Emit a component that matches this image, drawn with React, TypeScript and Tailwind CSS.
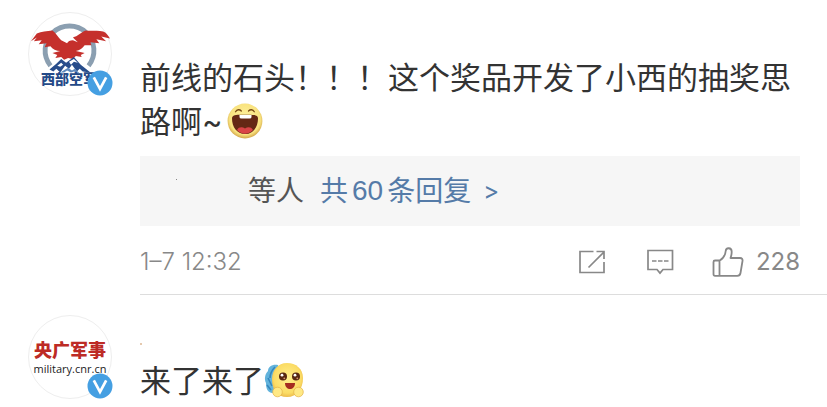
import React from 'react'

type IconProps = {
  className?: string
}

const VerifiedBadge = () => (
  <svg
    viewBox="0 0 26 26"
    className="absolute -right-px bottom-0 size-[26px]"
    role="img"
    aria-label="Verified"
  >
    <circle cx="13" cy="13" r="12.5" fill="#459fe2" />
    <path
      d="M6.8 7.4 13 19 19.2 7.4"
      fill="none"
      stroke="#fff"
      strokeWidth="2.7"
    />
  </svg>
)

const EagleLogo: React.FC<IconProps> = ({ className }) => (
  <svg viewBox="28 12 84 84" className={className} aria-hidden="true">
    <path
      d="M50 66a25 25 0 1 1 39 0"
      fill="none"
      stroke="#8b9fb1"
      strokeWidth="5"
    />
    <path
      d="M30 41 36 33c5-2 10-2 16-3 4 3 6 7 9 10l6 3c1-2 3-3 6-3l5 2-5-5c5-1 8-5 13-7 6 1 12-1 18 1 3 1 5 4 7 7l-9-2 5 5-10-2 3 4-9-1 1 3-7 0c-2 3-5 5-9 6l9 2-4 2 1 2-6-1-3 3-5-1-4 2-3-3-6 1 2-3-5-2 8-2c-4 0-8-2-10-5l-6 1 2-4-8 1 3-4-8 1 3-4z"
      fill="#c5302c"
    />
    <path
      d="m49 70 7-6 5-5 5 4 8-6 7 8 10 8-8-1-3-3-3 3-5-7-3 4-4-3-5 7-4-4-3 3z"
      fill="#284d8b"
    />
    <path
      d="m69 62 5-3 4 4-4-1-3 3zM57 66l4-3 2 2-3 2z"
      fill="#fff"
    />
    <path d="m60 73 8-5 4 3 3-2 5 5-6-2-3 1-4-2-3 2z" fill="#5d88bd" />
  </svg>
)

const LaughEmoji: React.FC<IconProps> = ({ className }) => (
  <svg
    viewBox="0 0 36 36"
    className={className}
    role="img"
    aria-label="Laughing"
  >
    <defs>
      <radialGradient id="laugh" cx=".5" cy=".45" r=".55">
        <stop offset="0" stopColor="#fff3a0" />
        <stop offset=".8" stopColor="#f9e380" />
        <stop offset="1" stopColor="#d2a548" />
      </radialGradient>
    </defs>
    <circle cx="18" cy="18" r="17.4" fill="url(#laugh)" />
    <path
      d="M8.5 8.8c1.5-2.6 4.2-2.6 5.8-.8M21.5 8c1.8-1.8 4.4-1.8 5.8.8"
      fill="none"
      stroke="#7a4b15"
      strokeWidth="1.3"
      strokeLinecap="round"
    />
    <path
      d="M5 15.5c0-4 5-3.7 13-3.7s13-.3 13 3.7C31 24 26 31 18 31S5 24 5 15.5z"
      fill="#652814"
    />
    <path
      d="M10 27c2-3.6 5.5-3 8-1.6 2.5-1.4 6-2 8 1.6-5 5-11 5-16 0z"
      fill="#d94446"
    />
    <path d="M12.5 12h12v2q0 1.5-2 1.5h-8q-2 0-2-1.5z" fill="#fff" />
  </svg>
)

const ExcitedEmoji: React.FC<IconProps> = ({ className }) => (
  <svg
    viewBox="0 0 40 36"
    className={className}
    role="img"
    aria-label="Excited"
  >
    <defs>
      <radialGradient id="excited" cx=".5" cy=".45" r=".58">
        <stop offset="0" stopColor="#fff08e" />
        <stop offset=".75" stopColor="#fbdc65" />
        <stop offset="1" stopColor="#e9b546" />
      </radialGradient>
    </defs>
    <path
      d="M14 3C8 2 4 5 4 9c-3 3-4 8-2 12 0 5 1 9 6 10l7-1z"
      fill="#62b3dc"
    />
    <path
      d="M11 5c-3 3-5 7-5 11M4 16l4 8M3 23l4 5"
      fill="none"
      stroke="#3687bd"
      strokeWidth="1.6"
    />
    <path
      d="M23 1c9 0 16 6 16 15 0 11-6 19-16 19S8 28 8 17C8 8 14 1 23 1z"
      fill="url(#excited)"
    />
    <circle cx="19" cy="14.5" r="4" fill="#572812" />
    <circle cx="32" cy="14.5" r="4" fill="#572812" />
    <circle cx="18" cy="13.2" r="1.4" fill="#fff" />
    <circle cx="31" cy="13.2" r="1.4" fill="#fff" />
    <circle cx="20.3" cy="16.3" r=".9" fill="#d99672" />
    <circle cx="33.3" cy="16.3" r=".9" fill="#d99672" />
    <path d="M21 21h10c0 8-10 8-10 0z" fill="#a52d20" />
    <g fill="#ffe985" stroke="#e2b247" strokeWidth=".7">
      <circle cx="13.5" cy="30" r="4.8" />
      <circle cx="34.5" cy="30" r="4.8" />
    </g>
  </svg>
)

const ShareIcon = () => (
  <svg
    viewBox="0 0 28 26"
    className="h-[26px] w-7"
    fill="none"
    stroke="currentColor"
    strokeWidth="1.7"
    aria-hidden="true"
  >
    <path d="M15.5 2.5H2v21h24V13M10.5 18.5 26 3M18.5 2.5H26V10" />
  </svg>
)

const CommentIcon = () => (
  <svg
    viewBox="0 0 28 26"
    className="h-[26px] w-7"
    fill="none"
    stroke="currentColor"
    strokeWidth="1.7"
    aria-hidden="true"
  >
    <path d="M2 1.5h24.5v19H17l-3 3.6-3-3.6H2z" />
    <path d="M6 12h4.5M12 12h4.5M18 12h4.5" />
  </svg>
)

const LikeIcon = () => (
  <svg
    viewBox="0 0 32 30"
    className="h-[30px] w-8"
    fill="none"
    stroke="currentColor"
    strokeWidth="1.8"
    strokeLinejoin="round"
    aria-hidden="true"
  >
    <path d="M3 13.5h4.7c3.5-2 5.5-5 6-9.5.3-3.8 6-3.8 6 .8 0 2.6-.5 4.4-1.2 6.2h9.5c2 0 2.8 1.3 2.5 3l-2 12c-.3 1.9-1.4 2.8-3.2 2.8H3q-1.5 0-1.5-1.5V15q0-1.5 1.5-1.5zM7.5 13.5v15.3" />
  </svg>
)

const App = () => {
  return (
    <main className="min-h-screen bg-white pt-3 font-['Inter','Noto_Sans_CJK_SC',sans-serif] text-[#333]">
      <article className="flex gap-7 pl-7">
        <div className="relative size-[84px] shrink-0">
          <div className="relative size-full rounded-full border border-[#eee]">
            <EagleLogo className="size-full" />
            <span className="absolute top-[58px] left-3 text-sm leading-4 font-black whitespace-nowrap text-[#254a88]">
              西部空军
            </span>
          </div>
          <VerifiedBadge />
        </div>

        <div className="min-w-0 flex-1 border-b border-[#ddd] pt-11 pb-4">
          <div className="pr-[27px]">
            <p className="-mr-4 text-[31px] leading-[44px]">
              前线的石头！！！这个奖品开发了小西的抽奖思路啊~
              <LaughEmoji className="ml-1 inline-block size-9 align-[-6px]" />
            </p>
            <div className="mt-3 flex h-[70px] items-center bg-[#f6f6f6] pl-9 text-[28px]">
              <span className="mb-6 size-px bg-[#888]" />
              <span className="ml-[71px] text-[#555]">等人</span>
              <a
                href="#replies"
                className="ml-4 flex items-center gap-1 text-[#557ba8]"
              >
                共
                <span className="font-['Liberation_Sans',sans-serif]">60</span>
                条回复
                <span className="ml-2 text-2xl">&gt;</span>
              </a>
            </div>
            <footer className="mt-5 flex h-8 items-center justify-between text-2xl font-light text-[#888]">
              <time>1–7 12:32</time>
              <div className="flex items-center">
                <button type="button" aria-label="Share">
                  <ShareIcon />
                </button>
                <button type="button" aria-label="Comment" className="ml-10">
                  <CommentIcon />
                </button>
                <button
                  type="button"
                  aria-label="Like"
                  className="ml-[38px] flex items-center gap-3"
                >
                  <LikeIcon />
                  <span className="font-normal">228</span>
                </button>
              </div>
            </footer>
          </div>
        </div>
      </article>

      <article className="flex gap-7 pt-5 pl-7">
        <div className="relative size-[84px] shrink-0">
          <div className="flex size-full flex-col items-center justify-center rounded-full border border-[#eee] pt-1 whitespace-nowrap">
            <span className="text-lg leading-5 font-black text-[#bd2b25]">
              央广军事
            </span>
            <span className="font-['Open_Sans',sans-serif] text-[11px] leading-4 text-[#222]">
              military.cnr.cn
            </span>
          </div>
          <VerifiedBadge />
        </div>
        <div className="min-w-0 flex-1 pt-7">
          <div className="size-0.5 bg-[#e5c9ae]" />
          <p className="mt-3.5 text-[31px] leading-[44px]">
            来了来了
            <ExcitedEmoji className="inline-block h-9 w-10 align-[-6px]" />
          </p>
        </div>
      </article>
    </main>
  )
}
export default App
